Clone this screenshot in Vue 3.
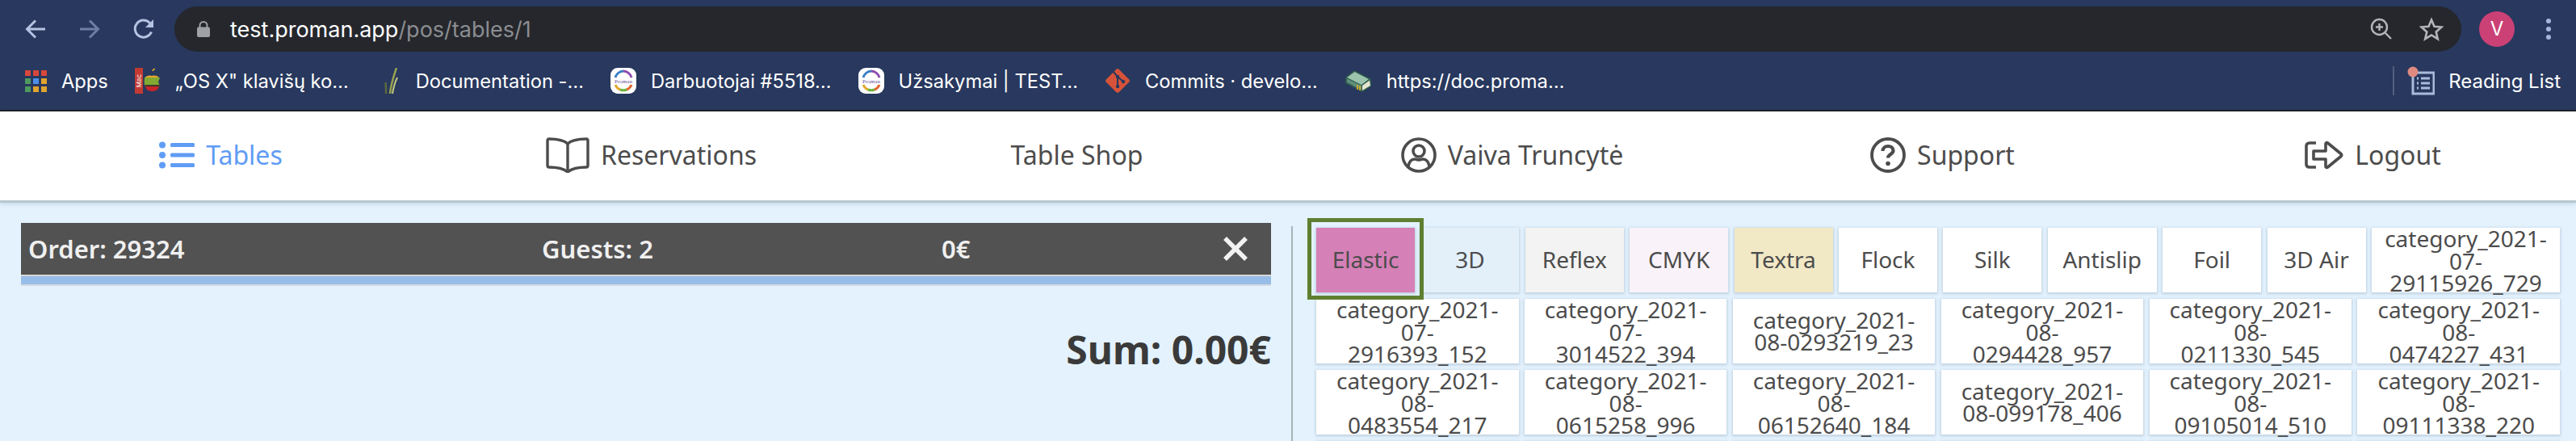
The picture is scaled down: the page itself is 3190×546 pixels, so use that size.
<script setup>
const bookmarks = [
  { id: 'mac', label: '„OS X" klavišų ko…' },
  { id: 'doc', label: 'Documentation -…' },
  { id: 'proman', label: 'Darbuotojai #5518…' },
  { id: 'proman', label: 'Užsakymai | TEST…' },
  { id: 'git', label: 'Commits · develo…' },
  { id: 'money', label: 'https://doc.proma…' }
];

const appColors = ['#d9473b', '#d9473b', '#d9473b', '#4f9a5f', '#4d8fe8', '#e0a32e', '#4f9a5f', '#e0a32e', '#e0a32e'];

const navItems = [
  { id: 'list', label: 'Tables', active: true },
  { id: 'book', label: 'Reservations' },
  { id: '', label: 'Table Shop' },
  { id: 'user', label: 'Vaiva Truncytė' },
  { id: 'help', label: 'Support' },
  { id: 'logout', label: 'Logout' }
];

const tabs = [
  { label: 'Elastic', color: '#d580b7', selected: true },
  { label: '3D', color: '#e3f0fa' },
  { label: 'Reflex', color: '#f3f3f3' },
  { label: 'CMYK', color: '#f9f3f9' },
  { label: 'Textra', color: '#f1e8c6' },
  { label: 'Flock' },
  { label: 'Silk' },
  { label: 'Antislip', wide: true },
  { label: 'Foil' },
  { label: '3D Air' },
  { label: 'category_2021-07-29115926_729', wrap: true }
];

const categories = [
  'category_2021-07-2916393_152',
  'category_2021-07-3014522_394',
  'category_2021-08-0293219_23',
  'category_2021-08-0294428_957',
  'category_2021-08-0211330_545',
  'category_2021-08-0474227_431',
  'category_2021-08-0483554_217',
  'category_2021-08-0615258_996',
  'category_2021-08-06152640_184',
  'category_2021-08-099178_406',
  'category_2021-08-09105014_510',
  'category_2021-08-09111338_220',
  'category_2021-08-10101010_101',
  'category_2021-08-10101122_318',
  'category_2021-08-10101240_472',
  'category_2021-08-10101355_590',
  'category_2021-08-10101502_644',
  'category_2021-08-10101633_785'
];
</script>

<template>
  <div class="page">
    <header class="chrome">
      <div class="toolbar">
        <div class="nav-buttons">
          <svg width="26" height="26" viewBox="0 0 26 26" fill="none" stroke="#b4c3e2" stroke-width="3"><path d="M25 13H3M13 2.5 2.5 13 13 23.5"/></svg>
          <svg width="26" height="26" viewBox="0 0 26 26" fill="none" stroke="#6e7fa6" stroke-width="3"><path d="M1 13h22M13 2.5 23.5 13 13 23.5"/></svg>
          <svg width="26" height="26" viewBox="0 0 26 26" fill="none" stroke="#b4c3e2" stroke-width="3"><path d="M22.5 16.5A10.5 10.5 0 1 1 20.5 5.5L24 9"/><path d="M25 1v10H15" fill="#b4c3e2" stroke="none"/></svg>
        </div>
        <div class="omnibox">
          <svg class="lock" width="18" height="20" viewBox="0 0 18 20"><path d="M4.5 8V5.5a4.5 4.5 0 0 1 9 0V8" fill="none" stroke="#9ea1a6" stroke-width="2"/><rect x="1" y="7.5" width="16" height="12.5" rx="2" fill="#9ea1a6"/></svg>
          <span class="url">test.proman.app<span class="url-path">/pos/tables/1</span></span>
          <svg class="zoom-icon" width="28" height="28" viewBox="0 0 28 28" fill="none" stroke="#b3b5b9" stroke-width="2.4"><circle cx="11.500" cy="11.500" r="9.500"/><path d="M18.500 18.500 26 26M11.500 7v9M7 11.500h9"/></svg>
          <svg class="star" width="30" height="30" viewBox="0 0 30 30" fill="none" stroke="#b3b5b9" stroke-width="2.6"><path d="M15 3.500 18.500 11.800 27.500 12.500 20.700 18.400 22.800 27.200 15 22.500 7.200 27.200 9.300 18.400 2.500 12.500 11.500 11.800Z"/></svg>
        </div>
        <div class="avatar">V</div>
        <div class="menu-dots"><i></i><i></i><i></i></div>
      </div>

      <div class="bookmarks">
        <div class="bookmark">
          <div class="apps-grid"><i v-for="(c, n) in appColors" :key="n" :style="{ background: c }"></i></div>
          <span>Apps</span>
        </div>
        <div v-for="b in bookmarks" :key="b.label" class="bookmark">
          <svg v-if="b.id === 'mac'" width="32" height="32" viewBox="0 0 32 32">
            <rect x="0" y="0" width="10" height="32" fill="#c23a34"/>
            <text x="-16" y="8" transform="rotate(-90)" text-anchor="middle" class="mac-text">Mac</text>
            <path d="M21 4c0-1.500 1.500-3 4-3.500 0 2-1.500 3.500-4 3.500Z" fill="#d9a52c"/>
            <path d="M12.500 12c1.500-2 5-3 8.500-2 3.500-1 7-.2 9 2Z" fill="#e2a62c"/>
            <path d="M12 12h19l-1 3c-1 .7-1 3 0 5l1 3H12.300C11.500 19 11.500 15 12 12Z" fill="#82a833"/>
            <rect x="12.300" y="21" width="18.400" height="2" fill="#3b3a26"/>
            <path d="M13 23h17c-1.500 4-4 6-6 5.500-2 .7-3.500 .7-5 0-2.500 .5-5-2-6-5.500Z" fill="#c8232b"/>
          </svg>
          <svg v-else-if="b.id === 'doc'" width="32" height="32" viewBox="0 0 32 32" fill="none">
            <path d="M18 32C19 20 23 9 26 0" stroke="#97a24e" stroke-width="2.500"/>
            <path d="M13 32C13 27 13 23 12.500 18" stroke="#5b6a3c" stroke-width="2.500"/>
            <path d="M21 32C22 26 23 20 27 12" stroke="#c3c87e" stroke-width="2"/>
          </svg>
          <svg v-else-if="b.id === 'proman'" width="32" height="32" viewBox="0 0 32 32" fill="none">
            <rect width="32" height="32" rx="9" fill="#fff"/>
            <path d="M6 12A11 11 0 0 1 16 4" stroke="#3b7dc4" stroke-width="3"/>
            <path d="M16 4A11 11 0 0 1 26 12" stroke="#8c4bb0" stroke-width="3"/>
            <path d="M6 21A11 11 0 0 0 12 27" stroke="#e0a92e" stroke-width="3"/>
            <path d="M12 27A11 11 0 0 0 20 27" stroke="#6bb33e" stroke-width="3"/>
            <path d="M20 27A11 11 0 0 0 26 21" stroke="#e0662e" stroke-width="3"/>
            <text x="16" y="18.500" text-anchor="middle" class="proman-text">Proman</text>
          </svg>
          <svg v-else-if="b.id === 'git'" width="32" height="32" viewBox="0 0 32 32">
            <rect x="4.700" y="4.700" width="22.600" height="22.600" rx="3" transform="rotate(45 16 16)" fill="#d6533a"/>
            <path d="M10 4 16 11 23 17M16 11v12" fill="none" stroke="#28385e" stroke-width="2"/>
            <circle cx="16" cy="11" r="2.200" fill="#28385e"/>
            <circle cx="23" cy="17" r="2.200" fill="#28385e"/>
            <circle cx="16" cy="23" r="2.200" fill="#28385e"/>
          </svg>
          <svg v-else width="34" height="32" viewBox="0 0 34 32">
            <path d="M1 12 12 3 33 14V23L22 30 1 19Z" fill="#2f5c4e"/>
            <path d="M3 12 12.500 5 30 14 21 21Z" fill="#9cc4ad"/>
            <path d="M22 22 31 15.500 32 22 22 28Z" fill="#e4e4cf"/>
            <path d="M3 13.500 21 22V27.500L3 18Z" fill="#5f8f7b"/>
            <path d="M16 21v6M19 22v6" stroke="#d2a92c" stroke-width="1.800"/>
          </svg>
          <span>{{ b.label }}</span>
        </div>
        <div class="reading">
          <svg class="reading-icon" width="34" height="36" viewBox="0 0 34 36" fill="none">
            <rect x="7" y="8" width="26" height="26" stroke="#a9bbdc" stroke-width="3"/>
            <path d="M12 15h2M17 15h11M12 21h2M17 21h11M12 27h2M17 27h11" stroke="#a9bbdc" stroke-width="3"/>
            <circle cx="7" cy="7" r="6.500" fill="#e08a80"/>
          </svg>
          <span>Reading List</span>
        </div>
      </div>
    </header>

    <nav class="main-nav">
      <a v-for="item in navItems" :key="item.label" class="nav-link" :class="{ active: item.active }">
        <svg v-if="item.id === 'list'" width="44" height="34" viewBox="0 0 44 34" fill="#5f9cf5">
          <circle cx="4" cy="4.500" r="4"/><circle cx="4" cy="17" r="4"/><circle cx="4" cy="29.500" r="4"/>
          <rect x="14" y="2" width="30" height="5" rx="1.500"/><rect x="14" y="14.500" width="30" height="5" rx="1.500"/><rect x="14" y="27" width="30" height="5" rx="1.500"/>
        </svg>
        <svg v-else-if="item.id === 'book'" width="54" height="44" viewBox="0 0 54 44" fill="none" stroke="#4c4c4c" stroke-width="3.400" stroke-linejoin="round">
          <path d="M27 8C22 3 12 2 4 2 2.500 2 2 3 2 4v31c0 1.500 1 2 2 2 9 0 17 1 23 6 6-5 14-6 23-6 1 0 2-.5 2-2V4c0-1-.5-2-2-2-8 0-18 1-23 6Z"/>
          <path d="M27 8v35"/>
        </svg>
        <svg v-else-if="item.id === 'user'" width="44" height="44" viewBox="0 0 44 44" fill="none" stroke="#4c4c4c" stroke-width="3.600">
          <circle cx="22" cy="22" r="20"/><circle cx="22" cy="17" r="7"/>
          <path d="M9 36c1-6 4-9 8-9 2 0 3 1 5 1s3-1 5-1c4 0 7 3 8 9"/>
        </svg>
        <svg v-else-if="item.id === 'help'" width="44" height="44" viewBox="0 0 44 44" fill="none" stroke="#4c4c4c" stroke-width="3.800">
          <circle cx="22" cy="22" r="20"/>
          <path d="M15.500 17c0-4 3-6 6.500-6s6.500 2 6.500 5.500c0 4.500-6.500 4.500-6.500 9" stroke-width="4.200"/>
          <circle cx="22" cy="32.500" r="2.800" fill="#4c4c4c" stroke="none"/>
        </svg>
        <svg v-else-if="item.id === 'logout'" width="48" height="36" viewBox="0 0 48 36" fill="none" stroke="#4c4c4c" stroke-width="3.600" stroke-linejoin="round">
          <path d="M14 3H6C3.500 3 2 4.500 2 7v22c0 2.500 1.500 4 4 4h8"/>
          <path d="M11 13h15V4c0-1.500 1.500-2 2.500-1L45 16.500c1 1 1 2 0 3L28.500 33c-1 1-2.500.5-2.500-1v-9H11Z"/>
        </svg>
        <span>{{ item.label }}</span>
      </a>
    </nav>

    <main class="content">
      <section class="order-panel">
        <div class="order-bar">
          <span>Order: 29324</span>
          <span>Guests: 2</span>
          <span>0€</span>
          <svg width="30" height="30" viewBox="0 0 30 30" stroke="#f2f2f2" stroke-width="5.500"><path d="M2 2 28 28M28 2 2 28"/></svg>
        </div>
        <div class="order-progress"></div>
        <div class="sum">Sum: 0.00€</div>
      </section>

      <section class="catalog">
        <div class="tabs">
          <button
            v-for="tab in tabs"
            :key="tab.label"
            class="tile tab"
            :class="{ selected: tab.selected, wide: tab.wide, 'tab-wrap': tab.wrap }"
            :style="tab.color ? { background: tab.color } : null"
          >{{ tab.label }}</button>
        </div>
        <div class="category-grid">
          <button v-for="c in categories" :key="c" class="tile">{{ c }}</button>
        </div>
      </section>
    </main>
  </div>
</template>

<style>
html, body {
  margin: 0;
  overflow: hidden;
}
</style>

<style scoped>
.page {
  width: 3190px;
  height: 546px;
  overflow: hidden;
  background: #e3f2fd;
  font-family: "Noto Sans", sans-serif;
  color: #4c4c4c;
}

.chrome {
  height: 136px;
  background: #28385e;
  border-bottom: 2px solid #1d2127;
  font-family: Inter, Roboto, sans-serif;
}

.toolbar {
  display: flex;
  align-items: center;
  height: 64px;
  padding-top: 8px;
  box-sizing: border-box;
}

.nav-buttons {
  flex: none;
  display: flex;
  gap: 41px;
  width: 216px;
  padding-left: 31px;
  box-sizing: border-box;
}

.omnibox {
  flex: 1;
  display: flex;
  align-items: center;
  box-sizing: border-box;
  height: 56px;
  margin-right: 22px;
  padding: 0 22px 0 27px;
  border-radius: 28px;
  background: #25272c;
}

.lock {
  margin-right: 24px;
}

.url {
  flex: 1;
  font-size: 27px;
  color: #fff;
}

.url-path {
  color: #8b8d91;
}

.star {
  margin-left: 33px;
}

.avatar {
  flex: none;
  width: 44px;
  height: 44px;
  margin-right: 39px;
  border-radius: 50%;
  background: #cb4176;
  color: #fff;
  font-size: 24px;
  line-height: 44px;
  text-align: center;
}

.menu-dots {
  flex: none;
  display: flex;
  flex-direction: column;
  gap: 4px;
  width: 37px;
}

.menu-dots i {
  width: 6px;
  height: 6px;
  border-radius: 50%;
  background: #a5b6d9;
}

.bookmarks {
  display: flex;
  align-items: center;
  gap: 33px;
  height: 72px;
  padding-left: 31px;
}

.bookmark {
  display: flex;
  align-items: center;
  gap: 18px;
  color: #fff;
  font-size: 23.700px;
  white-space: nowrap;
}

.apps-grid {
  display: grid;
  grid-template-columns: repeat(3, 7px);
  gap: 3px;
}

.apps-grid i {
  height: 7px;
}

.mac-text {
  font-size: 8px;
  fill: #fff;
  font-family: Inter, sans-serif;
}

.proman-text {
  font-size: 7px;
  fill: #6b4fa0;
  font-family: "Liberation Serif", serif;
}

.reading {
  display: flex;
  align-items: center;
  gap: 17px;
  margin-left: auto;
  margin-right: 19px;
  padding-left: 16px;
  border-left: 2px solid #51617f;
  color: #fff;
  font-size: 24px;
}

.main-nav {
  display: grid;
  grid-template-columns: repeat(6, 533px);
  align-items: center;
  height: 107px;
  padding: 0 0 3px 7px;
  background: #fff;
  border-bottom: 3px solid #b8c7cf;
  box-shadow: 0 2px 4px rgba(80, 110, 140, 0.18);
  position: relative;
}

.nav-link {
  display: flex;
  align-items: center;
  justify-content: center;
  gap: 14px;
  font-size: 32px;
  color: #4c4c4c;
}

.nav-link:nth-child(3) {
  margin-right: 12px;
}

.nav-link.active {
  color: #5f9cf5;
}

.content {
  display: flex;
}

.order-panel {
  flex: none;
  width: 1599px;
  padding: 25px 25px 0 26px;
  box-sizing: border-box;
}

.order-bar {
  display: grid;
  grid-template-columns: 636px 495px 349px auto;
  align-items: center;
  height: 64px;
  padding-left: 9px;
  background: #525252;
  color: #f0f0f0;
  font-size: 31px;
  font-weight: 600;
}

.order-progress {
  height: 10px;
  background: #98bde9;
  border-top: 2px solid #d6d6d6;
  border-bottom: 2px solid #d2d9e0;
}

.sum {
  margin-top: 46px;
  text-align: right;
  font-size: 48px;
  font-weight: 700;
  color: #3a3a3a;
}

.catalog {
  flex: 1;
  height: 300px;
  margin-top: 29px;
  padding: 2px 20px 0 29px;
  border-left: 2px solid #a9b3ba;
  box-sizing: border-box;
}

.tabs {
  display: flex;
  gap: 7.400px;
}

.tile {
  display: block;
  height: 80px;
  padding: 0 22px;
  border: 0;
  background: #fff;
  box-shadow: 0 1px 3px 1px #bfd0df;
  font-family: inherit;
  font-size: 28px;
  line-height: 27.500px;
  color: #4c4c4c;
  text-align: center;
  overflow: visible;
}

.tab {
  flex: none;
  width: 122px;
  padding: 0 4px;
}

.tab.wide {
  width: 135px;
}

.tab.tab-wrap {
  flex: 1;
  padding: 0 14px;
}

.tab.selected {
  position: relative;
  z-index: 1;
}

.tab.selected::after {
  content: "";
  position: absolute;
  inset: -12px -11px -9px -11px;
  border: 5px solid #5f7f30;
}

.category-grid {
  display: grid;
  grid-template-columns: repeat(6, 1fr);
  gap: 8px 7.400px;
  margin-top: 8px;
}
</style>
